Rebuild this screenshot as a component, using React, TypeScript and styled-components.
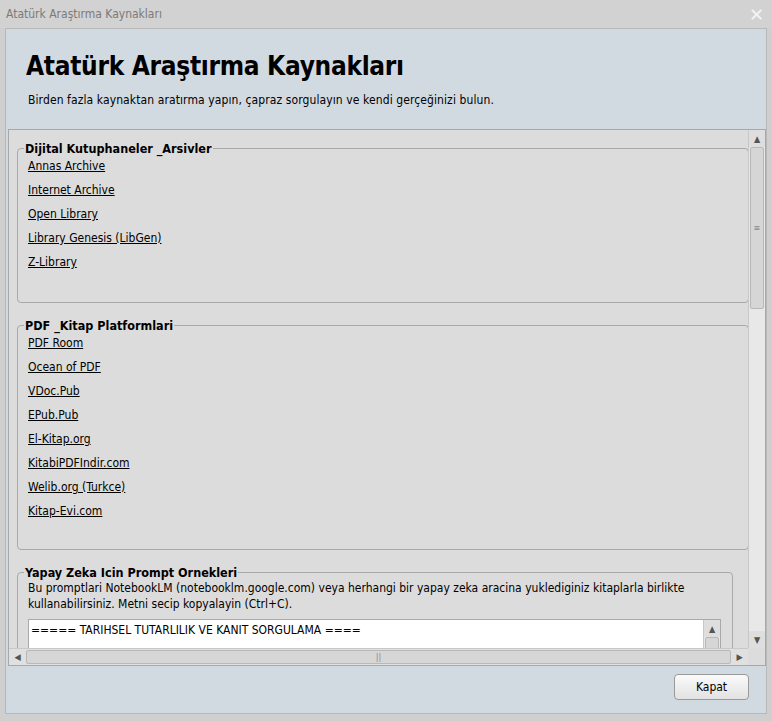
import React from "react";
import styled, { createGlobalStyle } from "styled-components";

const G = createGlobalStyle`
  html,body{margin:0;padding:0;background:#c9c9c9;}
  body{font-family:"DejaVu Sans Condensed","Liberation Sans Narrow","Liberation Sans",sans-serif;font-size:12px;color:#000;}
`;
const Win = styled.div`width:772px;height:721px;display:flex;flex-direction:column;background:#cfcfcf;`;
const TitleBar = styled.div`height:28px;display:flex;align-items:center;justify-content:space-between;padding:0 8px 0 6px;color:#7a7a7a;font-size:12px;background:#d2d2d2;`;
const Close = styled.span`color:#f4f4f4;font-size:18px;font-family:"DejaVu Sans",sans-serif;`;
const Body = styled.div`margin:0 5px;height:684px;border:1px solid #b8b8b8;background:#d2dae1;display:flex;flex-direction:column;`;
const Header = styled.div`height:100px;padding:0 0 0 20px;box-sizing:border-box;display:flex;flex-direction:column;`;
const H1 = styled.h1`margin:22px 0 0;font-family:"DejaVu Sans Condensed",sans-serif;font-size:26px;letter-spacing:-0.3px;font-weight:bold;`;
const Sub = styled.div`margin-top:12px;padding-left:2px;font-size:12px;letter-spacing:0.1px;`;
const ScrollArea = styled.div`margin:0 0 0 2px;width:758px;height:537px;display:grid;grid-template-columns:1fr 17px;grid-template-rows:1fr 17px;border:1px solid #a8a8a8;box-sizing:border-box;background:#dcdcdc;`;
const Content = styled.div`overflow:hidden;padding:11px 0 0 8px;display:flex;flex-direction:column;gap:15px;`;
const Group = styled.fieldset<{w:number;h:number}>`margin:0;width:${p=>p.w}px;height:${p=>p.h}px;box-sizing:border-box;border:1px solid #a9a9a9;border-radius:4px;padding:0 10px;flex-shrink:0;`;
const Legend = styled.legend`font-weight:bold;font-size:12.5px;padding:0 1px;margin-left:-4px;`;
const Links = styled.div`display:flex;flex-direction:column;gap:8px;margin-top:2px;`;
const A = styled.a`color:#000;text-decoration:underline;font-size:12px;line-height:16px;`;
const Note = styled.div`line-height:16px;margin-top:0;`;
const TextBox = styled.div`margin-top:7px;width:691px;height:40px;background:#fff;border:1px solid #a9a9a9;display:grid;grid-template-columns:1fr 17px;`;
const TxtLine = styled.div`padding:3px 2px;`;
const VBar = styled.div`background:#e8e8e8;border-left:1px solid #c8c8c8;display:flex;flex-direction:column;`;
const Arrow = styled.div`height:17px;display:flex;align-items:center;justify-content:center;font-size:9px;color:#555;background:#dedede;`;
const Thumb = styled.div<{h:number}>`height:${p=>p.h}px;margin:0 1px;background:#d6d6d6;border:1px solid #b8b8b8;border-radius:2px;display:flex;align-items:center;justify-content:center;color:#888;font-size:9px;`;
const Track = styled.div`flex:1;`;
const HBar = styled.div`background:#e0e0e0;border-top:1px solid #c8c8c8;display:flex;grid-column:1/2;`;
const HThumb = styled.div`flex:1;margin:1px 0;background:#d6d6d6;border:1px solid #b8b8b8;border-radius:2px;display:flex;align-items:center;justify-content:center;color:#888;font-size:9px;`;
const HArrow = styled.div`width:17px;display:flex;align-items:center;justify-content:center;font-size:9px;color:#555;`;
const Corner = styled.div`background:#dcdcdc;`;
const Footer = styled.div`flex:1;display:flex;justify-content:flex-end;align-items:flex-start;padding:8px 17px 0 0;`;
const Btn = styled.button`width:75px;height:26px;font-family:inherit;font-size:12px;border:1px solid #9a9a9a;border-radius:4px;background:linear-gradient(#fafafa,#e2e2e2);`;

const g1 = ["Annas Archive","Internet Archive","Open Library","Library Genesis (LibGen)","Z-Library"];
const g2 = ["PDF Room","Ocean of PDF","VDoc.Pub","EPub.Pub","El-Kitap.org","KitabiPDFIndir.com","Welib.org (Turkce)","Kitap-Evi.com"];

export default function App(){
  return <Win><G/>
    <TitleBar>Atatürk Araştırma Kaynakları<Close>✕</Close></TitleBar>
    <Body>
      <Header><H1>Atatürk Araştırma Kaynakları</H1><Sub>Birden fazla kaynaktan aratırma yapın, çapraz sorgulayın ve kendi gerçeğinizi bulun.</Sub></Header>
      <ScrollArea>
        <Content>
          <Group w={732} h={162}><Legend>Dijital Kutuphaneler _Arsivler</Legend><Links>{g1.map(l=><A key={l} href="#">{l}</A>)}</Links></Group>
          <Group w={732} h={232}><Legend>PDF _Kitap Platformlari</Legend><Links>{g2.map(l=><A key={l} href="#">{l}</A>)}</Links></Group>
          <Group w={716} h={120}><Legend>Yapay Zeka Icin Prompt Ornekleri</Legend>
            <Note>Bu promptlari NotebookLM (notebooklm.google.com) veya herhangi bir yapay zeka aracina yuklediginiz kitaplarla birlikte kullanabilirsiniz. Metni secip kopyalayin (Ctrl+C).</Note>
            <TextBox><TxtLine>===== TARIHSEL TUTARLILIK VE KANIT SORGULAMA ====</TxtLine><VBar><Arrow>▲</Arrow><Thumb h={20}/></VBar></TextBox>
          </Group>
        </Content>
        <VBar><Arrow>▲</Arrow><Thumb h={160}>≡</Thumb><Track/><Arrow>▼</Arrow></VBar>
        <HBar><HArrow>◀</HArrow><HThumb>||</HThumb><HArrow>▶</HArrow></HBar>
        <Corner/>
      </ScrollArea>
      <Footer><Btn>Kapat</Btn></Footer>
    </Body>
  </Win>;
}
